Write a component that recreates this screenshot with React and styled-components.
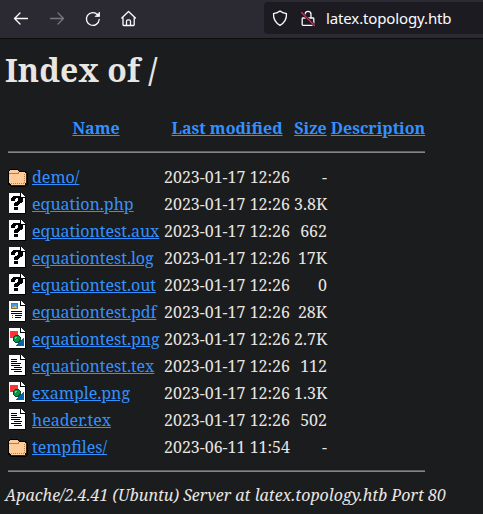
import React from "react";
import styled, { createGlobalStyle } from "styled-components";

const GlobalStyle = createGlobalStyle`
  body { margin: 0; background: #1b1c1d; overflow: hidden; }
  * { box-sizing: border-box; }
`;

const Page = styled.div`
  height: 514px;
  background: #1b1c1d;
  color: #e8e6e3;
  font: 16px/22px "Noto Serif", "Droid Serif", "DejaVu Serif", serif;
  white-space: nowrap;
`;

const Toolbar = styled.header`
  height: 39px;
  display: flex;
  align-items: flex-start;
  background: #2b2a33;
  border-bottom: 1px solid #0c0c0d;
`;

const NavButtons = styled.nav`
  display: flex;
  width: 264px;
  padding: 10px 0 0 13px;
  gap: 20px;
`;

const AddressBar = styled.div`
  flex: 1;
  height: 32px;
  margin-top: 2px;
  padding: 0 0 0 8px;
  display: flex;
  align-items: center;
  gap: 12px;
  border-radius: 4px 0 0 4px;
  background: #1c1b22;
`;

const Address = styled.span`
  margin-left: -2px;
  color: #fbfbfe;
  font: 15px/20px "Noto Sans", sans-serif;
  letter-spacing: -0.13px;
`;

const Glyph = styled.svg`
  display: block;
  flex: none;
  width: 16px;
  height: 16px;
  overflow: visible;
  fill: none;
  stroke: ${(p) => (p.$dim ? "#77767c" : "#fbfbfe")};
  stroke-width: 1.3;
  stroke-linecap: round;
  stroke-linejoin: round;
`;

const Title = styled.h1`
  margin: 9px 0 0 5px;
  font-size: 32px;
  line-height: 44px;
  font-weight: 700;
`;

const Listing = styled.main`
  width: 417px;
  margin: 22px 0 0 8px;
`;

const Row = styled.div`
  display: grid;
  grid-template-columns: 20px 128px 126px 33px 94px;
  column-gap: 4px;
  height: 27px;
  padding-top: 3px;
  align-items: start;
`;

const HeaderRow = styled(Row)`
  font-weight: 700;
  justify-items: center;
`;

const Rule = styled.hr`
  height: 2px;
  margin: ${(p) => (p.$top ? "10px 0" : "10px 0 0")};
  border: 0;
  border-top: 1px solid #5f6061;
  background: #858585;
`;

const Link = styled.a`
  color: #3391ff;
  text-decoration: underline;
`;

const Size = styled.span`
  text-align: right;
`;

const FileIcon = styled.svg`
  display: block;
  width: 20px;
  height: 22px;
  margin-top: -1px;
  shape-rendering: crispEdges;
`;

const Signature = styled.address`
  margin: 12px 0 0 5px;
  font-style: italic;
`;

function Sheet({ children }) {
  return (
    <FileIcon viewBox="0 0 20 22">
      <path d="M2 2h16v20h-16z" fill="#000" />
      <path d="M1 1h11v5h5v15h-16z" fill="#fff" />
      <path d="M12 1h1v5h-1z" fill="#000" />
      <path d="M12 5h5v1h-5z" fill="#000" />
      <path d="M13 1h1v1h1v1h1v1h1v1h-4z" fill="#fff" />
      <path d="M14 0h4v5h-1v-1h-1v-1h-1v-1h-1z" fill="#1b1c1d" />
      {children}
    </FileIcon>
  );
}

const icons = {
  folder: (
    <FileIcon viewBox="0 0 20 22">
      <path d="M2 4h8v1h1v1h7v1h1v1h1v12h-1v1h-1v1h-15v-1h-1v-1h-2v-14h1v-1h1z" fill="#000" />
      <path d="M2 5h8v1h1v1h6v1h1v10h-1v2h-14v-1h-1v-1h-1v-12h1z" fill="#ffcc99" />
      <path d="M1 8h9v-1h1v2h-10z" fill="#bd7b42" />
      <path d="M1 9h9v1h-9z" fill="#ffcc99" />
      <path d="M3 18.500h14M16.500 9v10" fill="none" stroke="#bd7b42" strokeDasharray="1 1" />
      <path d="M18 8h1v11h-1zM3 20h15v1h-15z" fill="#2e2219" />
    </FileIcon>
  ),
  unknown: (
    <Sheet>
      <path
        d="M5 4h7v1h2v1h1v4h-1v1h-2v1h-1v1h-1v1h-4v-3h1v-1h2v-1h1v-3h-2v1h-1v2h-4v-3h1v-1h1zM6 15h4v3h-4z"
        fill="#000"
      />
    </Sheet>
  ),
  layout: (
    <Sheet>
      <path d="M3 3h7v6h-7z" fill="#9c6b31" />
      <path d="M4 4h5v3h-5z" fill="#3c9de8" />
      <path d="M4 7h2v-1h2v1h1v1h-5z" fill="#e8b449" />
      <path d="M3 11h11v1h-11zM3 13h11v1h-11zM7 15h7v1h-7zM7 17h6v1h-6z" fill="#000" />
      <path d="M4 15h1v1h-1zM4 17h1v1h-1z" fill="#f00" />
    </Sheet>
  ),
  image: (
    <Sheet>
      <path d="M2 4h8v7h-8z" fill="#ff3333" />
      <path d="M16 11v8h-9z" fill="#0066b3" />
      <path d="M7 8h4v1h1v1h1v4h-1v1h-1v1h-4v-1h-1v-1h-1v-4h1v-1h1z" fill="#064b2d" />
      <path d="M7 9h4v1h1v3h-1v1h-1v1h-3v-1h-1v-4h1z" fill="#079447" />
      <path d="M7 10h2v1h-1v1h-1z" fill="#66d58a" />
    </Sheet>
  ),
  text: (
    <Sheet>
      <path
        d="M3 5h6v1h-6zM3 7h6v1h-6zM3 9h10v1h-10zM3 11h9v1h-9zM6 13h8v1h-8zM3 15h10v1h-10zM6 17h8v1h-8z"
        fill="#000"
      />
    </Sheet>
  ),
};

const files = [
  ["folder", "demo/", "2023-01-17 12:26", "-"],
  ["unknown", "equation.php", "2023-01-17 12:26", "3.8K"],
  ["unknown", "equationtest.aux", "2023-01-17 12:26", "662"],
  ["unknown", "equationtest.log", "2023-01-17 12:26", "17K"],
  ["unknown", "equationtest.out", "2023-01-17 12:26", "0"],
  ["layout", "equationtest.pdf", "2023-01-17 12:26", "28K"],
  ["image", "equationtest.png", "2023-01-17 12:26", "2.7K"],
  ["text", "equationtest.tex", "2023-01-17 12:26", "112"],
  ["image", "example.png", "2023-01-17 12:26", "1.3K"],
  ["text", "header.tex", "2023-01-17 12:26", "502"],
  ["folder", "tempfiles/", "2023-06-11 11:54", "-"],
];

export default function App() {
  return (
    <Page>
      <GlobalStyle />
      <Toolbar>
        <NavButtons>
          <Glyph viewBox="0 0 16 16">
            <path d="M14.500 8.500H1.500M7 3L1.500 8.500L7 14" />
          </Glyph>
          <Glyph $dim viewBox="0 0 16 16">
            <path d="M1.500 8.500h13M9 3l5.500 5.500L9 14" />
          </Glyph>
          <Glyph viewBox="0 0 16 16">
            <path d="M12.600 4.700A6.400 6.400 0 1 0 14.200 9.500" />
            <path d="M14.500 2.500v4h-4z" fill="#fbfbfe" strokeWidth="0.8" />
          </Glyph>
          <Glyph viewBox="0 0 16 16">
            <path d="M0.800 8L7.500 1.500L14.400 8M2 7.500v7.200q0 .8.8.8h9.600q.8 0 .8-.8v-7.200" />
            <path d="M5.500 15.300v-4q0-1.500 1.500-1.500h1q1.500 0 1.500 1.500v4" />
          </Glyph>
        </NavButtons>
        <AddressBar>
          <Glyph viewBox="0 0 16 16">
            <path d="M8 .9c1.800 1.500 4 2.200 6.500 2.700c.2 5.400-1.600 9.200-6.500 11.700c-4.900-2.500-6.700-6.300-6.500-11.700c2.500-.5 4.700-1.200 6.500-2.700z" />
          </Glyph>
          <Glyph viewBox="0 0 16 16">
            <path d="M3 8h10q.8 0 .8.8v5.700q0 .8-.8.8h-10q-.8 0-.8-.8v-5.700q0-.8.8-.8zM5 7.800v-3.500a3 3 0 0 1 6 0v3.500" />
            <path d="M1.500 2.500l13 13" stroke="#1c1b22" strokeWidth="2.800" />
            <path d="M1.500 2.500l13 13" stroke="#e22850" />
          </Glyph>
          <Address>latex.topology.htb</Address>
        </AddressBar>
      </Toolbar>
      <Title>Index of /</Title>
      <Listing>
        <HeaderRow>
          <span />
          <Link>Name</Link>
          <Link>Last modified</Link>
          <Link>Size</Link>
          <Link>Description</Link>
        </HeaderRow>
        <Rule $top />
        {files.map(([icon, name, date, size]) => (
          <Row key={name}>
            {icons[icon]}
            <span><Link>{name}</Link></span>
            <span>{date}</span>
            <Size>{size}</Size>
          </Row>
        ))}
        <Rule />
      </Listing>
      <Signature>Apache/2.4.41 (Ubuntu) Server at latex.topology.htb Port 80</Signature>
    </Page>
  );
}
